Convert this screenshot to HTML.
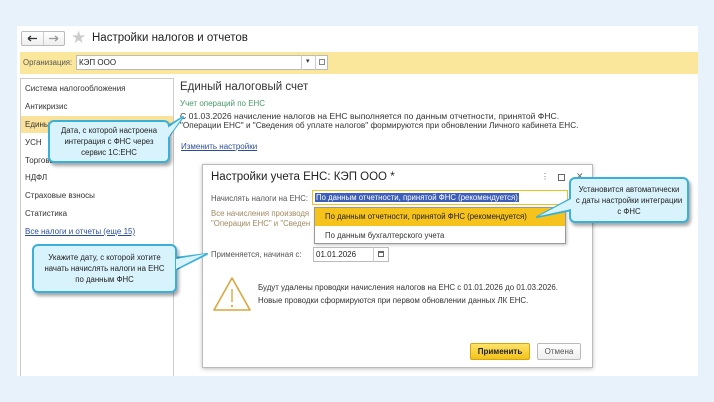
<!DOCTYPE html>
<html><head><meta charset="utf-8"><style>
*{margin:0;padding:0;box-sizing:border-box}
body{width:714px;height:402px;background:#e8f2fb;font-family:"Liberation Sans",sans-serif;position:relative;overflow:hidden;color:#333}
.a{position:absolute}
.t{font-size:8px;white-space:nowrap}
.call{position:absolute;background:#d9f3fc;border:2px solid #3ab0d8;border-radius:6px;box-shadow:2px 3px 3px rgba(0,0,0,.35);font-size:7.8px;text-align:center;color:#222;line-height:11px;display:flex;align-items:center;justify-content:center}
</style></head><body>
<div class="a" style="left:17px;top:26px;width:681px;height:350px;background:#fff"></div>
<!-- header -->
<div class="a" style="left:21px;top:31px;width:44px;height:15px;border:1px solid #bbb;border-radius:2px;background:linear-gradient(#fff,#eee)"></div>
<div class="a" style="left:43px;top:32px;width:1px;height:13px;background:#ccc"></div>
<svg class="a" style="left:21px;top:31px" width="44" height="15"><path d="M7 7.5 H16 M7 7.5 L10 5 M7 7.5 L10 10" stroke="#333" stroke-width="1.3" fill="none"/><path d="M28 7.5 H37 M37 7.5 L34 5 M37 7.5 L34 10" stroke="#999" stroke-width="1.3" fill="none"/></svg>
<div class="a" style="left:71px;top:28px;font-size:17px;color:#ccc;line-height:20px">★</div>
<div class="a t" style="left:92px;top:32px;font-size:11.5px;color:#222">Настройки налогов и отчетов</div>
<!-- org bar -->
<div class="a" style="left:20px;top:52px;width:678px;height:22px;background:#fbe79c"></div>
<div class="a t" style="left:23px;top:58px;color:#555;font-size:7.8px">Организация:</div>
<div class="a" style="left:76px;top:55px;width:252px;height:15px;background:#fff;border:1px solid #bbb"></div>
<div class="a t" style="left:79px;top:58px;color:#222">КЭП ООО</div>
<div class="a" style="left:301px;top:55px;width:1px;height:15px;background:#ccc"></div>
<div class="a" style="left:315px;top:55px;width:1px;height:15px;background:#ccc"></div>
<div class="a t" style="left:306px;top:57px;font-size:7px">▾</div>
<div class="a" style="left:319px;top:59px;width:6px;height:6px;border:1px solid #888"></div>
<!-- left panel -->
<div class="a" style="left:20px;top:78px;width:154px;height:298px;border:1px solid #ccc;border-bottom:none"></div>
<div class="a" style="left:21px;top:116px;width:152px;height:17px;background:#fbe29a"></div>
<div class="a t" style="left:25px;top:84px">Система налогообложения</div>
<div class="a t" style="left:25px;top:102px">Антикризис</div>
<div class="a t" style="left:25px;top:120px">Единый</div>
<div class="a t" style="left:25px;top:138px">УСН</div>
<div class="a t" style="left:25px;top:156px">Торговый</div>
<div class="a t" style="left:25px;top:173px">НДФЛ</div>
<div class="a t" style="left:25px;top:191px">Страховые взносы</div>
<div class="a t" style="left:25px;top:209px">Статистика</div>
<div class="a t" style="left:25px;top:227px;color:#2a4e9c;text-decoration:underline">Все налоги и отчеты (еще 15)</div>
<!-- right content -->
<div class="a t" style="left:180px;top:81px;font-size:11.5px;color:#333">Единый налоговый счет</div>
<div class="a t" style="left:180px;top:99px;color:#4a9a6a">Учет операций по ЕНС</div>
<div class="a t" style="left:180px;top:111px;font-size:8.6px">С 01.03.2026 начисление налогов на ЕНС выполняется по данным отчетности, принятой ФНС.</div>
<div class="a t" style="left:180px;top:121px;font-size:8.2px">"Операции ЕНС" и "Сведения об уплате налогов" формируются при обновлении Личного кабинета ЕНС.</div>
<div class="a t" style="left:181px;top:142px;color:#2a4e9c;text-decoration:underline">Изменить настройки</div>
<!-- dialog -->
<div class="a" style="left:202px;top:164px;width:391px;height:204px;background:#fff;border:1px solid #bbb;box-shadow:0 1px 4px rgba(0,0,0,.25)"></div>
<div class="a t" style="left:211px;top:171px;font-size:11.5px;color:#222">Настройки учета ЕНС: КЭП ООО *</div>
<div class="a t" style="left:541px;top:172px;color:#666">⋮</div>
<div class="a" style="left:558px;top:174px;width:7px;height:7px;border:1px solid #666"></div>
<div class="a t" style="left:576px;top:171px;color:#666;font-size:9px">✕</div>
<div class="a t" style="left:211px;top:194px;color:#555;font-size:7.8px">Начислять налоги на ЕНС:</div>
<div class="a" style="left:312px;top:190px;width:256px;height:15px;border:1px solid #f0c020;background:#fff"></div>
<div class="a t" style="left:315px;top:193px;background:#3d5fb8;color:#fff;padding:0 1px;font-size:7.8px">По данным отчетности, принятой ФНС (рекомендуется)</div>
<div class="a t" style="left:211px;top:209px;color:#a08a60;font-size:7.8px">Все начисления производя</div>
<div class="a t" style="left:211px;top:219px;color:#a08a60;font-size:7.8px">"Операции ЕНС" и "Сведен</div>
<div class="a" style="left:314px;top:207px;width:252px;height:37px;border:1px solid #999;background:#fff;box-shadow:1px 1px 3px rgba(0,0,0,.25)"></div>
<div class="a" style="left:315px;top:208px;width:250px;height:18px;background:#f6c31c"></div>
<div class="a t" style="left:325px;top:212px;color:#222;font-size:7.8px">По данным отчетности, принятой ФНС (рекомендуется)</div>
<div class="a t" style="left:325px;top:231px;color:#333;font-size:7.8px">По данным бухгалтерского учета</div>
<div class="a t" style="left:211px;top:250px;color:#555;font-size:7.8px">Применяется, начиная с:</div>
<div class="a" style="left:313px;top:247px;width:76px;height:15px;border:1px solid #bbb"></div>
<div class="a" style="left:373px;top:247px;width:1px;height:15px;background:#ccc"></div>
<div class="a t" style="left:316px;top:250px;color:#222">01.01.2026</div>
<div class="a" style="left:378px;top:251px;width:6px;height:6px;border:1px solid #666;border-top-width:2px"></div>
<svg class="a" style="left:212px;top:276px" width="40" height="36"><path d="M20 2 L38 34 L2 34 Z" fill="none" stroke="#d9a73b" stroke-width="1.6" stroke-linejoin="round"/><path d="M20 13 V26" stroke="#d9a73b" stroke-width="1.4"/><circle cx="20" cy="30" r="1.1" fill="#d9a73b"/></svg>
<div class="a t" style="left:258px;top:283px;font-size:7.9px">Будут удалены проводки начисления налогов на ЕНС с 01.01.2026 до 01.03.2026.</div>
<div class="a t" style="left:258px;top:296px;font-size:7.9px">Новые проводки сформируются при первом обновлении данных ЛК ЕНС.</div>
<div class="a t" style="left:470px;top:343px;width:60px;height:17px;background:linear-gradient(#fde36a,#f3c219);border:1px solid #d4a614;border-radius:2px;font-weight:bold;text-align:center;line-height:15px;color:#222">Применить</div>
<div class="a t" style="left:537px;top:343px;width:44px;height:17px;background:linear-gradient(#fff,#eee);border:1px solid #bbb;border-radius:2px;text-align:center;line-height:15px;color:#555">Отмена</div>
<!-- callouts -->
<svg class="a" style="left:0;top:0" width="714" height="402">
<path d="M165 128 L183 117 L166 140 Z" fill="#d9f3fc" stroke="#3ab0d8" stroke-width="2" stroke-linejoin="round"/>
<path d="M175 258 L207 254 L175 270 Z" fill="#d9f3fc" stroke="#3ab0d8" stroke-width="2" stroke-linejoin="round"/>
<path d="M572 198 L537 217 L572 210 Z" fill="#d9f3fc" stroke="#3ab0d8" stroke-width="2" stroke-linejoin="round"/>
</svg>
<div class="call" style="left:48px;top:120px;width:122px;height:43px">Дата, с которой настроена<br>интеграция с ФНС через<br>сервис 1С:ЕНС</div>
<div class="call" style="left:32px;top:244px;width:145px;height:49px">Укажите дату, с которой хотите<br>начать начислять налоги на ЕНС<br>по данным ФНС</div>
<div class="call" style="left:569px;top:177px;width:120px;height:46px">Установится автоматически<br>с даты настройки интеграции<br>с ФНС</div>
<svg class="a" style="left:0;top:0" width="714" height="402">
<path d="M166 129 L182 118 L167 139" fill="#d9f3fc" stroke="none"/>
<path d="M176 259 L205 254 L176 269" fill="#d9f3fc" stroke="none"/>
<path d="M571 199 L539 216 L571 209" fill="#d9f3fc" stroke="none"/>
</svg>
</body></html>
